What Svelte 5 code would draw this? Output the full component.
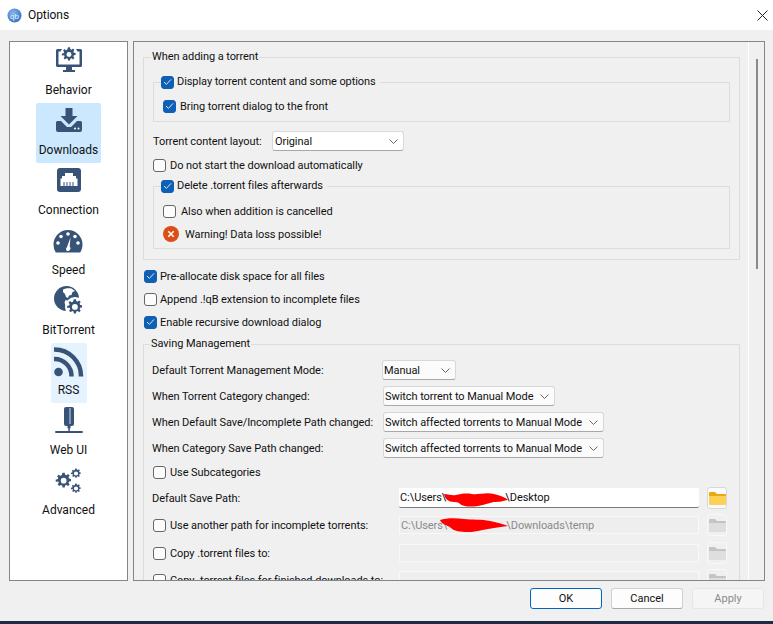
<script>
  const sideItems = [
    { label: "Behavior", icon: "behavior", top: 3 },
    { label: "Downloads", icon: "downloads", cls: "sel", top: 5 },
    { label: "Connection", icon: "connection", top: 5 },
    { label: "Speed", icon: "speed", top: 6 },
    { label: "BitTorrent", icon: "bittorrent", top: 3 },
    { label: "RSS", icon: "rss", cls: "hover", top: 4 },
    { label: "Web UI", icon: "webui", top: 4 },
    { label: "Advanced", icon: "advanced", top: 5 }
  ];

  const modeRows = [
    { label: "Default Torrent Management Mode:", value: "Manual", width: 74, left: 230 },
    { label: "When Torrent Category changed:", value: "Switch torrent to Manual Mode", width: 172, left: 231 },
    { label: "When Default Save/Incomplete Path changed:", value: "Switch affected torrents to Manual Mode", width: 221, left: 231 },
    { label: "When Category Save Path changed:", value: "Switch affected torrents to Manual Mode", width: 221, left: 231 }
  ];

  const gear = "M10.500 1h3l.5 2.700 1.900.8 2.300-1.600 2.100 2.100-1.600 2.300.8 1.900 2.700.5v3l-2.700.5-.8 1.900 1.600 2.300-2.100 2.100-2.300-1.600-1.900.8-.5 2.700h-3l-.5-2.700-1.900-.8-2.300 1.600-2.100-2.100 1.600-2.300-.8-1.900L1 13.500v-3l2.700-.5.8-1.900-1.600-2.300 2.100-2.100 2.300 1.600 1.900-.8z";
</script>

{#snippet check(on)}
  <span class="cb" class:on>
    {#if on}
      <svg width="9" height="8" viewBox="0 0 9 8"><path d="M1 4l2.400 2.400L8 1.400" fill="none" stroke="#dbe9f8" stroke-width="1"/></svg>
    {/if}
  </span>
{/snippet}

{#snippet chevron()}
  <svg class="chev" width="9" height="5" viewBox="0 0 9 5"><path d="M.5.5l4 4 4-4" fill="none" stroke="#666" stroke-width="1"/></svg>
{/snippet}

{#snippet folder(on)}
  <span class="fbtn" class:on>
    <svg width="17" height="14" viewBox="0 0 17 14">
      <path d="M0 2a1 1 0 0 1 1-1h5l2 2h8a1 1 0 0 1 1 1v1H0z" fill={on ? "#e9a90f" : "#c4c4c4"}/>
      <path d="M0 5h17v8a1 1 0 0 1-1 1H1a1 1 0 0 1-1-1z" fill={on ? "#fbd158" : "#dedede"}/>
    </svg>
  </span>
{/snippet}

{#snippet icon(name)}
  {#if name === "behavior"}
    <svg width="26" height="26" viewBox="0 0 26 26">
      <path d="M1.500 3h23A1.500 1.500 0 0 1 26 4.500v15a1.500 1.500 0 0 1-1.500 1.500H16v3h3v2H7v-2h3v-3H1.500A1.500 1.500 0 0 1 0 19.500v-15A1.500 1.500 0 0 1 1.500 3z" fill="#375478"/>
      <rect x="2.500" y="5.500" width="21" height="13" fill="#fff"/>
      <circle cx="13" cy="8.500" r="9" fill="#fff"/>
      <g transform="translate(5.200 .7) scale(.65)"><path d={gear} fill="#375478"/><circle cx="12" cy="12" r="3.800" fill="#fff"/></g>
    </svg>
  {:else if name === "downloads"}
    <svg width="26" height="26" viewBox="0 0 26 26">
      <path d="M9.500 0h7v8h5l-8.500 8.500L4.500 8h5z" fill="#375478"/>
      <path d="M1.500 13H5l6 6h4l6-6h3.500a1.500 1.500 0 0 1 1.500 1.500V22a2 2 0 0 1-2 2H2a2 2 0 0 1-2-2v-7.500A1.500 1.500 0 0 1 1.500 13z" fill="#375478"/>
      <circle cx="19" cy="20.500" r="1" fill="#fff"/><circle cx="22.500" cy="20.500" r="1" fill="#fff"/>
    </svg>
  {:else if name === "connection"}
    <svg width="24" height="24" viewBox="0 0 24 24">
      <rect width="24" height="24" rx="3" fill="#375478"/>
      <path d="M8 5h8v3h3v2.500h1.500V18h-17v-7.500H5V8h3z" fill="#fff"/>
      <path d="M7 14v4M10 14v4M13 14v4M16 14v4" stroke="#375478" stroke-width="1"/>
    </svg>
  {:else if name === "speed"}
    <svg width="30" height="24" viewBox="0 0 30 24">
      <path d="M15 1a14.500 14.500 0 0 1 14.500 14.500c0 3-.9 5.700-2.300 8H2.800A14.500 14.500 0 0 1 .5 15.500 14.500 14.500 0 0 1 15 1z" fill="#375478"/>
      <g fill="#fff">
        <circle cx="15" cy="5" r="1.800"/><circle cx="8" cy="7.500" r="1.800"/><circle cx="22" cy="7.500" r="1.800"/>
        <circle cx="5" cy="14" r="1.800"/><circle cx="25" cy="14" r="1.800"/>
        <path d="M17.500 8.500l-.8 9a2.300 2.300 0 1 1-3.500 3.700 3 3 0 0 1 .8-3.200z"/>
      </g>
    </svg>
  {:else if name === "bittorrent"}
    <svg width="30" height="30" viewBox="0 0 30 30">
      <circle cx="12.500" cy="12.500" r="12.500" fill="#375478"/>
      <path d="M9 3.500c3-1.500 5.500-1.500 8.500-1l3.500 2.500-2.500 1-1 3-2.500.5-1 2.500-2-1-1-3-2-2zM11.500 14l3.500 1 .5 2-2 2.500-1 3-1-3-1-3z" fill="#fff"/>
      <circle cx="21" cy="21" r="10" fill="#fff"/>
      <g transform="translate(12.500 12.500) scale(.7)"><path d={gear} fill="#375478"/><circle cx="12" cy="12" r="4.200" fill="#fff"/></g>
    </svg>
  {:else if name === "rss"}
    <svg width="30" height="30" viewBox="0 0 30 30">
      <circle cx="4.500" cy="25" r="4.300" fill="#375478"/>
      <path d="M0 12a17 17 0 0 1 17.500 17.500" fill="none" stroke="#375478" stroke-width="4.500"/>
      <path d="M0 2.500a26.500 26.500 0 0 1 27 27" fill="none" stroke="#375478" stroke-width="4.500"/>
    </svg>
  {:else if name === "webui"}
    <svg width="28" height="27" viewBox="0 0 28 27">
      <path d="M11 0h6a2 2 0 0 1 2 2v15a2 2 0 0 1-2 2h-6a2 2 0 0 1-2-2V2a2 2 0 0 1 2-2z" fill="#375478"/>
      <rect x="14.500" y="1" width="1" height="16" fill="#cfd8e3"/>
      <circle cx="14" cy="20" r="1.700" fill="#375478"/>
      <rect x="13.300" y="20" width="1.500" height="4" fill="#375478"/>
      <rect x="0" y="24" width="28" height="2" rx="1" fill="#375478"/>
    </svg>
  {:else}
    <svg width="27" height="27" viewBox="0 0 27 27">
      <g transform="translate(0 4) scale(.72)"><path d={gear} fill="#375478"/><circle cx="12" cy="12" r="4" fill="#fff"/></g>
      <g transform="translate(15.500 0) scale(.46)"><path d={gear} fill="#375478"/><circle cx="12" cy="12" r="4.500" fill="#fff"/></g>
      <g transform="translate(15.500 15) scale(.46)"><path d={gear} fill="#375478"/><circle cx="12" cy="12" r="4.500" fill="#fff"/></g>
    </svg>
  {/if}
{/snippet}

<div class="win">
  <header class="title">
    <svg width="15" height="15" viewBox="0 0 15 15">
      <defs><radialGradient id="qb" cx=".4" cy=".35" r=".7"><stop offset="0" stop-color="#8db8ea"/><stop offset="1" stop-color="#2d6fc4"/></radialGradient></defs>
      <circle cx="7.500" cy="7.500" r="7" fill="url(#qb)"/>
      <text x="7.500" y="10.500" text-anchor="middle" font-size="8" fill="#e9f1fb" font-family="Liberation Sans, sans-serif">qb</text>
    </svg>
    <span>Options</span>
    <svg class="close" width="11" height="11" viewBox="0 0 11 11"><path d="M.5.5l10 10M10.500.5l-10 10" stroke="#222" stroke-width="1"/></svg>
  </header>

  <div class="body">
    <nav class="side">
      {#each sideItems as item}
        <div class="item {item.cls ?? ''}">
          <div class="ico" style="padding-top:{item.top}px">{@render icon(item.icon)}</div>
          <div class="lbl">{item.label}</div>
        </div>
      {/each}
    </nav>

    <main class="panel">
      <div class="content">
        <fieldset class="outer first">
          <legend>When adding a torrent</legend>

          <fieldset class="inner g1">
            <legend class="cl">{@render check(true)}<span>Display torrent content and some options</span></legend>
            <label class="row bring">{@render check(true)}<span>Bring torrent dialog to the front</span></label>
          </fieldset>

          <div class="row layout">
            <span class="llabel">Torrent content layout:</span>
            <span class="combo white" style="width:132px">Original{@render chevron()}</span>
          </div>

          <label class="row nostart">{@render check(false)}<span>Do not start the download automatically</span></label>

          <fieldset class="inner g2">
            <legend class="cl">{@render check(true)}<span>Delete .torrent files afterwards</span></legend>
            <label class="row also">{@render check(false)}<span>Also when addition is cancelled</span></label>
            <div class="row warn">
              <svg width="16" height="16" viewBox="0 0 16 16">
                <circle cx="8" cy="8" r="8" fill="#dc4e18"/>
                <path d="M5.300 5.300l5.400 5.400M10.700 5.300l-5.400 5.400" stroke="#fff" stroke-width="1.500"/>
              </svg>
              <span>Warning! Data loss possible!</span>
            </div>
          </fieldset>
        </fieldset>

        <label class="row top">{@render check(true)}<span>Pre-allocate disk space for all files</span></label>
        <label class="row top">{@render check(false)}<span>Append .!qB extension to incomplete files</span></label>
        <label class="row top">{@render check(true)}<span>Enable recursive download dialog</span></label>

        <fieldset class="outer saving">
          <legend>Saving Management</legend>

          {#each modeRows as r}
            <div class="mode">
              <span class="mlabel" style="width:{r.left}px">{r.label}</span>
              <span class="combo" style="width:{r.width}px">{r.value}{@render chevron()}</span>
            </div>
          {/each}

          <label class="row sub">{@render check(false)}<span>Use Subcategories</span></label>

          <div class="path first-path">
            <span class="plabel nocheck">Default Save Path:</span>
            <span class="input live">
              C:\Users\<i class="gap"></i>\Desktop
              <svg class="scribble a" width="66" height="15" viewBox="0 0 66 15"><path d="M1 2c5 0 8 2 12 1s10-2 16-1 14-2 22 0 12 4 14 6c-5 1-8 2-14 2-6 1-9 3-16 4-7 1-14 1-18-2-2-3-8-1-11-3S2 6 1 2z" fill="#f00"/></svg>
            </span>
            {@render folder(true)}
          </div>

          <div class="path p2">
            <span class="plabel">{@render check(false)}<span>Use another path for incomplete torrents:</span></span>
            <span class="input off">
              C:\Users\<i class="gap"></i>\Downloads\temp
              <svg class="scribble b" width="70" height="15" viewBox="0 0 70 15"><path d="M1 2c6-2 16-2 24-1s18 0 26 2 14 3 18 5c-8 1-14 2-20 3-8 1-12 3-20 3S15 13 12 10 3 7 1 2z" fill="#f00"/></svg>
            </span>
            {@render folder(false)}
          </div>

          <div class="path p3">
            <span class="plabel">{@render check(false)}<span>Copy .torrent files to:</span></span>
            <span class="input off"></span>
            {@render folder(false)}
          </div>

          <div class="path p2">
            <span class="plabel">{@render check(false)}<span>Copy .torrent files for finished downloads to:</span></span>
            <span class="input off"></span>
            {@render folder(false)}
          </div>
        </fieldset>
      </div>

      <div class="track"><div class="thumb"></div></div>
    </main>
  </div>

  <footer class="btns">
    <button class="ok">OK</button>
    <button>Cancel</button>
    <button class="dim">Apply</button>
  </footer>
  <div class="taskbar"></div>
</div>

<style>
  :global(body) { margin: 0; background: #f0f0f0; }

  .win {
    width: 773px;
    height: 624px;
    overflow: hidden;
    display: flex;
    flex-direction: column;
    background: #f0f0f0;
    color: #111;
    font: 11px Roboto, Lato, sans-serif;
    letter-spacing: -.07px;
  }

  .title {
    height: 30px;
    flex: none;
    background: #fff;
    display: flex;
    align-items: center;
    gap: 6px;
    padding: 0 5px 0 7px;
    font-size: 12px;
  }
  .close { margin-left: auto; }

  .body {
    height: 540px;
    flex: none;
    margin-top: 11px;
    padding: 0 8px 0 9px;
    display: flex;
    gap: 5px;
  }

  .side {
    width: 119px;
    flex: none;
    background: #fff;
    border: 1px solid #84848c;
    box-sizing: border-box;
    padding-top: 1px;
    display: flex;
    flex-direction: column;
    align-items: center;
  }
  .item {
    height: 60px;
    flex: none;
    display: flex;
    flex-direction: column;
    align-items: center;
    border-radius: 2px;
    padding: 0 2px;
    box-sizing: border-box;
    text-align: center;
  }
  .ico { height: 40px; box-sizing: border-box; display: flex; align-items: flex-start; justify-content: center; }
  .lbl { font-size: 12px; letter-spacing: 0; white-space: nowrap; }
  .item.sel { background: #cce8ff; width: 65px; }
  .item.hover { background: #e5f3ff; width: 36px; }

  .panel {
    flex: 1;
    min-width: 0;
    border: 1px solid #84848c;
    box-sizing: border-box;
    display: flex;
    overflow: hidden;
  }
  .content {
    width: 615px;
    flex: none;
    padding: 7px 0 0 9px;
    box-sizing: border-box;
    border-right: 1px solid #fff;
  }
  .track { flex: 1; padding: 17px 0 0 7px; }
  .thumb { width: 2px; height: 210px; background: #8a8a8a; }

  fieldset {
    margin: 0;
    padding: 0;
    border: 1px solid #dcdcdc;
    min-width: 0;
  }
  legend { padding: 0 1px; margin-left: -2px; line-height: 16px; }
  .outer { width: 597px; box-sizing: border-box; }
  .first { height: 211px; padding: 0 9px; }
  .inner { width: 577px; box-sizing: border-box; }
  .inner legend { padding: 0 4px 0 0; }
  .g1 { margin-top: 9px; height: 48px; padding: 0 9px; }
  .g2 { height: 71px; margin-top: 3px; padding: 0 9px; }

  .cl, .row { display: flex; align-items: center; gap: 3px; white-space: nowrap; }
  .row { height: 20px; }
  .bring { margin-top: 6px; gap: 4px; }
  .layout { margin-top: 9px; gap: 0; }
  .llabel { width: 119px; flex: none; }
  .nostart { margin-top: 4px; gap: 4px; }
  .also { margin-top: 7px; gap: 5px; }
  .warn { margin-top: 3px; gap: 6px; }
  .top { margin: 3px 0 0 1px; }
  .first + .top { margin-top: 6px; }

  .cb {
    width: 13px;
    height: 13px;
    flex: none;
    box-sizing: border-box;
    border: 1px solid #666;
    border-radius: 3px;
    background: #fcfcfc;
    display: inline-flex;
    align-items: center;
    justify-content: center;
  }
  .cb.on { background: #0f5fb5; border-color: #0f5fb5; }

  .combo {
    height: 20px;
    flex: none;
    box-sizing: border-box;
    border: 1px solid #d8d8d8;
    border-bottom-color: #a8a8a8;
    border-radius: 3px;
    background: #fbfbfb;
    display: flex;
    align-items: center;
    justify-content: space-between;
    padding: 0 5px 0 1px;
    white-space: nowrap;
  }
  .combo.white { background: #fff; padding-left: 2px; }

  .saving { margin-top: 4px; height: 300px; padding: 0 0 0 8px; }
  .mode { height: 20px; display: flex; align-items: center; margin-bottom: 6px; }
  .mode:first-of-type { margin-top: 8px; }
  .mlabel { flex: none; white-space: nowrap; }
  .sub { margin: -2px 0 0 1px; gap: 4px; }

  .path { display: flex; align-items: center; height: 22px; }
  .first-path, .p2 { margin-top: 5px; }
  .p3 { margin-top: 6px; }
  .plabel { width: 246px; flex: none; display: flex; align-items: center; gap: 4px; margin-left: 1px; white-space: nowrap; }
  .plabel.nocheck { margin-left: 0; width: 247px; }
  .input {
    width: 300px;
    height: 18px;
    flex: none;
    box-sizing: border-box;
    position: relative;
    display: flex;
    align-items: center;
    padding-left: 1px;
    white-space: pre;
  }
  .input.live {
    height: 20px;
    background: #fff;
    border-bottom: 1px solid #7a7a7a;
    border-radius: 2px;
    color: #111;
  }
  .input.off { background: #eeeeee; border: 1px solid #f8f8f8; color: #8a8a8a; }
  .gap { display: inline-block; width: 59px; }
  .scribble { position: absolute; }
  .scribble.a { left: 44px; top: 4px; }
  .scribble.b { left: 39px; top: 1px; }

  .fbtn {
    width: 20px;
    height: 22px;
    margin-left: 8px;
    flex: none;
    box-sizing: border-box;
    border: 1px solid #f8f8f8;
    border-radius: 3px;
    display: flex;
    align-items: center;
    justify-content: center;
  }
  .fbtn.on { background: #fbfbfb; border-color: #d8d8d8; }

  .btns {
    height: 40px;
    flex: none;
    display: flex;
    justify-content: flex-end;
    align-items: flex-start;
    gap: 9px;
    padding: 7px 9px 0 0;
    box-sizing: border-box;
  }
  button {
    width: 72px;
    height: 21px;
    font: inherit;
    color: #111;
    background: #fdfdfd;
    border: 1px solid #d0d0d0;
    border-bottom-color: #a8a8a8;
    border-radius: 3px;
    padding: 0;
  }
  .ok { border: 1px solid #0067c0; }
  .dim { color: #8a8a8a; background: #f5f5f5; border-color: #e6e6e6; }

  .taskbar { height: 3px; flex: none; background: #1d2c43; }
</style>
